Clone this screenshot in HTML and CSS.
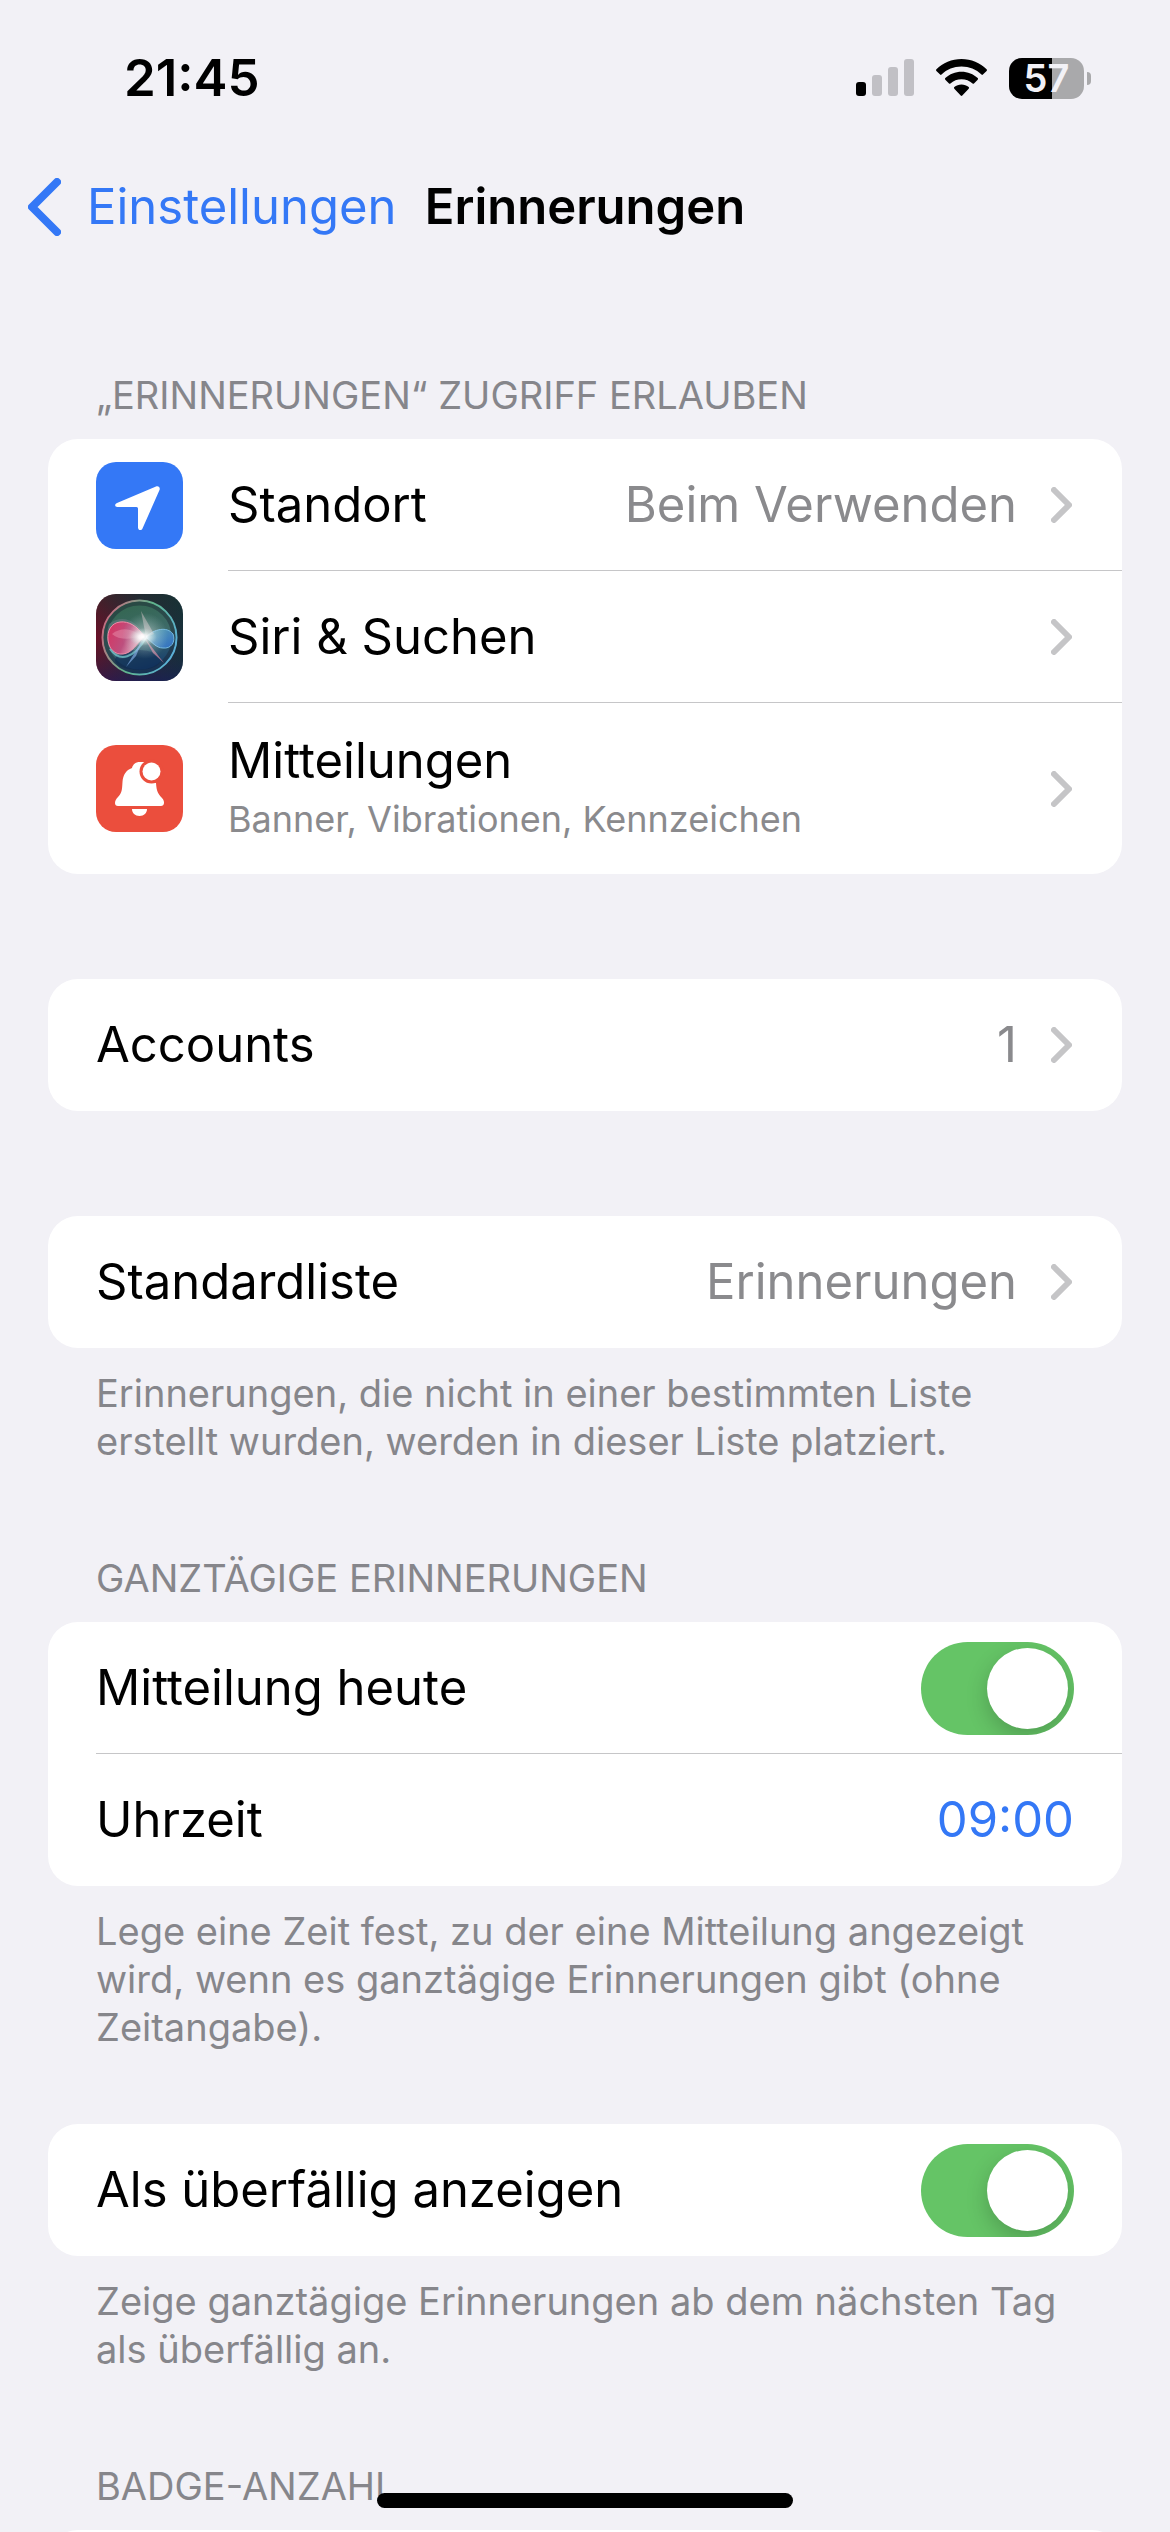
FILE: index.html
```html
<!DOCTYPE html>
<html lang="de">
<head>
    <meta charset="UTF-8">
    <meta name="viewport" content="width=device-width, initial-scale=1.0">
    <title>Erinnerungen</title>
    <link rel="stylesheet" href="styles.css">
</head>
<body>
    <div class="status-bar">
        <time class="clock">21:45</time>
        <div class="status-icons">
            <svg class="signal" viewBox="0 0 58 38" aria-hidden="true">
                <rect x="0" y="23" width="10" height="14" rx="3"/>
                <rect class="off" x="16" y="16" width="10" height="21" rx="3"/>
                <rect class="off" x="32" y="8" width="10" height="29" rx="3"/>
                <rect class="off" x="48" y="0" width="10" height="37" rx="3"/>
            </svg>
            <svg class="wifi" viewBox="0 0 51 38" aria-hidden="true">
                <path d="M25.500 0C35.200 0 44.200 3.800 50.600 10.300C51.100 10.800 51.100 11.400 50.600 11.900L46.900 15.600C46.500 16 45.900 16 45.500 15.600C40.200 10.400 33.200 7.600 25.500 7.600C17.800 7.600 10.800 10.400 5.500 15.600C5.100 16 4.500 16 4.100 15.600L0.400 11.900C-0.100 11.400-0.100 10.800 0.400 10.300C6.800 3.800 15.800 0 25.500 0Z"/>
                <path d="M25.500 12.800C31.700 12.800 37.400 15.100 41.700 19.100C42.200 19.600 42.200 20.200 41.700 20.700L38 24.400C37.600 24.800 37 24.800 36.600 24.400C33.600 21.700 29.700 20.200 25.500 20.200C21.300 20.200 17.400 21.700 14.400 24.400C14 24.800 13.400 24.800 13 24.400L9.300 20.700C8.800 20.200 8.800 19.600 9.300 19.100C13.600 15.100 19.300 12.800 25.500 12.800Z"/>
                <path d="M25.500 25.600C28.200 25.600 30.700 26.500 32.700 28.100C33.200 28.600 33.200 29.200 32.700 29.700L26.300 36.500C25.800 37 25.200 37 24.700 36.500L18.300 29.700C17.800 29.200 17.800 28.600 18.300 28.100C20.300 26.500 22.800 25.600 25.500 25.600Z"/>
            </svg>
            <div class="battery"><span>57</span></div>
        </div>
    </div>

    <nav class="nav-bar">
        <a class="back" href="#">
            <svg viewBox="0 0 33 58" aria-hidden="true"><path d="M29 4L4 29L29 54"/></svg>
            Einstellungen
        </a>
        <h1>Erinnerungen</h1>
    </nav>

    <main>
        <section>
            <h2>„ERINNERUNGEN“ ZUGRIFF ERLAUBEN</h2>
            <div class="card">
                <a class="row with-icon" href="#">
                    <svg class="app-icon" viewBox="0 0 87 87" aria-hidden="true">
                        <rect width="87" height="87" rx="20" fill="#3478f6"/>
                        <path d="M21 41L60 24.500C62.500 23.500 64.500 25.500 63.500 28L46.500 66.500C45.500 69 42 68.500 42 65.500V46.500Q42 45 40.500 45H21.500C18.500 45 18.500 42 21 41Z" fill="#fff"/>
                    </svg>
                    <span class="label">Standort</span>
                    <span class="value">Beim Verwenden</span>
                    <svg class="chevron" viewBox="0 0 21 36" aria-hidden="true"><path d="M3 3L18 18L3 33"/></svg>
                </a>
                <a class="row with-icon" href="#">
                    <svg class="app-icon" viewBox="0 0 87 87" aria-hidden="true">
                        <defs>
                            <linearGradient id="siriBack" x1="0" y1="0" x2="1" y2="0">
                                <stop offset="0" stop-color="#6a1028"/>
                                <stop offset="0.500" stop-color="#30253a"/>
                                <stop offset="1" stop-color="#18303c"/>
                            </linearGradient>
                            <linearGradient id="siriShade" x1="0" y1="0" x2="0" y2="1">
                                <stop offset="0" stop-color="#16332a" stop-opacity="0.500"/>
                                <stop offset="0.500" stop-color="#16332a" stop-opacity="0"/>
                                <stop offset="1" stop-color="#161c5c" stop-opacity="0.600"/>
                            </linearGradient>
                            <linearGradient id="siriOrb" x1="0.300" y1="0" x2="0.600" y2="1">
                                <stop offset="0" stop-color="#33664e"/>
                                <stop offset="0.500" stop-color="#3d6a68"/>
                                <stop offset="1" stop-color="#12396e"/>
                            </linearGradient>
                            <linearGradient id="siriRing" x1="0" y1="0.300" x2="1" y2="0.700">
                                <stop offset="0" stop-color="#c86a80"/>
                                <stop offset="0.500" stop-color="#5fb48c"/>
                                <stop offset="1" stop-color="#5bb0dc"/>
                            </linearGradient>
                            <linearGradient id="siriPink" x1="0" y1="0" x2="1" y2="0.400">
                                <stop offset="0" stop-color="#d8325e"/>
                                <stop offset="0.600" stop-color="#bd4f7e"/>
                                <stop offset="1" stop-color="#e8b8c8"/>
                            </linearGradient>
                            <linearGradient id="siriBlue" x1="0" y1="0" x2="1" y2="1">
                                <stop offset="0" stop-color="#5fa6ae"/>
                                <stop offset="1" stop-color="#2f6cc4"/>
                            </linearGradient>
                            <radialGradient id="siriGlow">
                                <stop offset="0" stop-color="#fff"/>
                                <stop offset="0.300" stop-color="#fff" stop-opacity="0.800"/>
                                <stop offset="1" stop-color="#b8e0d8" stop-opacity="0"/>
                            </radialGradient>
                        </defs>
                        <rect width="87" height="87" rx="20" fill="url(#siriBack)"/>
                        <rect width="87" height="87" rx="20" fill="url(#siriShade)"/>
                        <circle cx="43.500" cy="43.500" r="37" fill="url(#siriOrb)" stroke="url(#siriRing)" stroke-width="2"/>
                        <circle cx="43.500" cy="43.500" r="34" fill="none" stroke="#1b2634" stroke-opacity="0.450" stroke-width="4"/>
                        <path d="M13 30C26 20 40 26 49 42C40 54 34 66 24 65C13 60 8 44 13 30Z" fill="#73818c" fill-opacity="0.450"/>
                        <ellipse cx="42" cy="66" rx="23" ry="10" fill="#0d2a52" fill-opacity="0.600"/>
                        <path d="M48 42C41 32 33 27 24 28C15 29 11 37 12 46C13 55 19 61 27 60C36 59 41 50 48 42Z" fill="url(#siriPink)" stroke="#f08ca8" stroke-width="1"/>
                        <path d="M45 42C36 34 25 33 16 40C23 46 34 46 45 42Z" fill="#f0a0b8" fill-opacity="0.400"/>
                        <path d="M14 55C24 69 38 64 50 44" fill="none" stroke="#6fc0c8" stroke-opacity="0.800" stroke-width="2"/>
                        <path d="M50 43C58 35 71 32 77 40C80 48 75 55 67 54C60 54 56 48 50 43Z" fill="url(#siriBlue)" stroke="#74b8e0" stroke-width="1"/>
                        <path d="M48 43L68 69L57 59Z" fill="#d88ba4" fill-opacity="0.700"/>
                        <path d="M48 43L30 73L40 62Z" fill="#7ea8e0" fill-opacity="0.700"/>
                        <path d="M50 43L45 17L58 40Z" fill="#e0c8cc" fill-opacity="0.450"/>
                        <circle cx="49" cy="42" r="23" fill="url(#siriGlow)" fill-opacity="0.450"/>
                        <ellipse cx="47" cy="43" rx="14" ry="9" fill="url(#siriGlow)"/>
                    </svg>
                    <span class="label">Siri &amp; Suchen</span>
                    <svg class="chevron" viewBox="0 0 21 36" aria-hidden="true"><path d="M3 3L18 18L3 33"/></svg>
                </a>
                <a class="row with-icon tall" href="#">
                    <svg class="app-icon" viewBox="0 0 87 87" aria-hidden="true">
                        <rect width="87" height="87" rx="20" fill="#eb4e3d"/>
                        <path d="M36 23C37 19 40 17 44 17H49L48 31L60 38C60.500 46 62 49 66 53C68 55 68 57 68 58C68 60 66.500 61 65 61H22C20 61 19 60 19 58C19 56 20 54 22 52C26 48 26 45 26.500 37C27 30 30 25 36 23Z" fill="#fff"/>
                        <circle cx="55.500" cy="26.500" r="12" fill="#eb4e3d"/>
                        <circle cx="55.500" cy="26.500" r="9" fill="#fff"/>
                        <path d="M36 64H51C51 68 48 71 43.500 71C39 71 36 68 36 64Z" fill="#fff"/>
                    </svg>
                    <span class="label">Mitteilungen<small>Banner, Vibrationen, Kennzeichen</small></span>
                    <svg class="chevron" viewBox="0 0 21 36" aria-hidden="true"><path d="M3 3L18 18L3 33"/></svg>
                </a>
            </div>
        </section>

        <section>
            <div class="card">
                <a class="row" href="#">
                    <span class="label">Accounts</span>
                    <span class="value">1</span>
                    <svg class="chevron" viewBox="0 0 21 36" aria-hidden="true"><path d="M3 3L18 18L3 33"/></svg>
                </a>
            </div>
        </section>

        <section>
            <div class="card">
                <a class="row" href="#">
                    <span class="label">Standardliste</span>
                    <span class="value">Erinnerungen</span>
                    <svg class="chevron" viewBox="0 0 21 36" aria-hidden="true"><path d="M3 3L18 18L3 33"/></svg>
                </a>
            </div>
            <p class="note">Erinnerungen, die nicht in einer bestimmten Liste erstellt wurden, werden in dieser Liste platziert.</p>
        </section>

        <section>
            <h2>GANZTÄGIGE ERINNERUNGEN</h2>
            <div class="card">
                <div class="row">
                    <label class="label" for="notifyToday">Mitteilung heute</label>
                    <input class="switch" type="checkbox" id="notifyToday" checked>
                </div>
                <div class="row">
                    <span class="label" id="timeLabel">Uhrzeit</span>
                    <button class="time-button" type="button" aria-describedby="timeLabel">09:00</button>
                </div>
            </div>
            <p class="note">Lege eine Zeit fest, zu der eine Mitteilung angezeigt wird, wenn es ganztägige Erinnerungen gibt (ohne Zeitangabe).</p>
        </section>

        <section>
            <div class="card">
                <div class="row">
                    <label class="label" for="showOverdue">Als überfällig anzeigen</label>
                    <input class="switch" type="checkbox" id="showOverdue" checked>
                </div>
            </div>
            <p class="note">Zeige ganztägige Erinnerungen ab dem nächsten Tag als überfällig an.</p>
        </section>

        <section>
            <h2>BADGE-ANZAHL</h2>
            <div class="card">
                <div class="row"></div>
            </div>
        </section>
    </main>

    <div class="home-indicator"></div>
</body>
</html>
```
FILE: styles.css
```css
* {
    box-sizing: border-box;
}
body {
    margin: 0;
    height: 100vh;
    overflow: hidden;
    background-color: #f2f1f6;
    color: #000;
    font-family: Inter, "Liberation Sans", sans-serif;
    font-size: 49px;
    line-height: 60px;
}
h1, h2, p {
    margin: 0;
}
a {
    color: inherit;
    text-decoration: none;
}

/* Status bar */
.status-bar {
    display: flex;
    justify-content: space-between;
    align-items: center;
    height: 156px;
    padding: 0 86px 0 124px;
}
.clock {
    font-size: 51px;
    font-weight: 600;
}
.status-icons {
    display: flex;
    align-items: center;
    gap: 22px;
}
.signal {
    width: 58px;
    height: 38px;
}
.signal .off {
    fill: #c1c0c5;
}
.wifi {
    width: 51px;
    height: 38px;
}
.battery {
    position: relative;
    width: 75px;
    height: 41px;
    border-radius: 13px;
    background: linear-gradient(to right, #000 57%, #a9a9ab 57%);
    color: #f2f1f6;
    font-size: 38px;
    font-weight: 600;
    line-height: 41px;
    text-align: center;
}
.battery::after {
    content: "";
    position: absolute;
    left: 78px;
    top: 14px;
    width: 4px;
    height: 13px;
    border-radius: 0 4px 4px 0;
    background-color: #a9a9ab;
}

/* Navigation bar */
.nav-bar {
    display: grid;
    grid-template-columns: 1fr auto 1fr;
    align-items: center;
    height: 102px;
    padding: 0 28px;
}
.back {
    display: flex;
    align-items: center;
    gap: 26px;
    color: #3478f6;
}
.back svg {
    width: 33px;
    height: 58px;
    fill: none;
    stroke: #3478f6;
    stroke-width: 8;
    stroke-linecap: round;
    stroke-linejoin: round;
}
h1 {
    font-size: 49px;
    font-weight: 600;
}

/* Groups */
main {
    display: flex;
    flex-direction: column;
    gap: 73px;
    padding: 97px 48px 0;
}
h2 {
    padding: 16px 48px 20px;
    color: #86868b;
    font-size: 38px;
    font-weight: 400;
    line-height: 48px;
}
.card {
    border-radius: 30px;
    background-color: #fff;
    overflow: hidden;
}
.card:last-child {
    margin-bottom: 32px;
}
.note {
    padding: 21px 48px 0;
    color: #86868b;
    font-size: 38px;
    line-height: 48px;
}

/* Rows */
.row {
    position: relative;
    display: flex;
    align-items: center;
    min-height: 132px;
    padding: 0 48px;
}
.tall {
    min-height: 171px;
}
.row:not(:last-child)::after {
    content: "";
    position: absolute;
    left: 48px;
    right: 0;
    bottom: 0;
    height: 1px;
    background-color: #c6c6c8;
}
.with-icon:not(:last-child)::after {
    left: 180px;
}
.app-icon {
    width: 87px;
    height: 87px;
    margin-right: 45px;
}
.label {
    flex: 1;
}
.label small {
    display: block;
    color: #8a8a8d;
    font-size: 36px;
    line-height: 56px;
}
.value {
    color: #8a8a8d;
}
.chevron {
    width: 21px;
    height: 36px;
    margin: 0 2px 0 34px;
    fill: none;
    stroke: #c5c5c7;
    stroke-width: 6;
    stroke-linecap: round;
    stroke-linejoin: round;
}
.time-button {
    padding: 0;
    border: 0;
    background: none;
    color: #3478f6;
    font: inherit;
}

/* Switch */
.switch {
    appearance: none;
    display: flex;
    align-items: center;
    width: 153px;
    height: 93px;
    margin: 0;
    padding: 6px;
    border-radius: 47px;
    background-color: #e9e9ea;
    overflow: hidden;
}
.switch::before {
    content: "";
    width: 81px;
    height: 81px;
    border-radius: 50%;
    background-color: #fff;
    box-shadow: 0 8px 22px rgba(0, 0, 0, 0.2);
}
.switch:checked {
    justify-content: flex-end;
    background-color: #65c466;
}

.home-indicator {
    position: fixed;
    left: 50%;
    bottom: 24px;
    width: 416px;
    height: 15px;
    margin-left: -208px;
    border-radius: 8px;
    background-color: #000;
}
```
